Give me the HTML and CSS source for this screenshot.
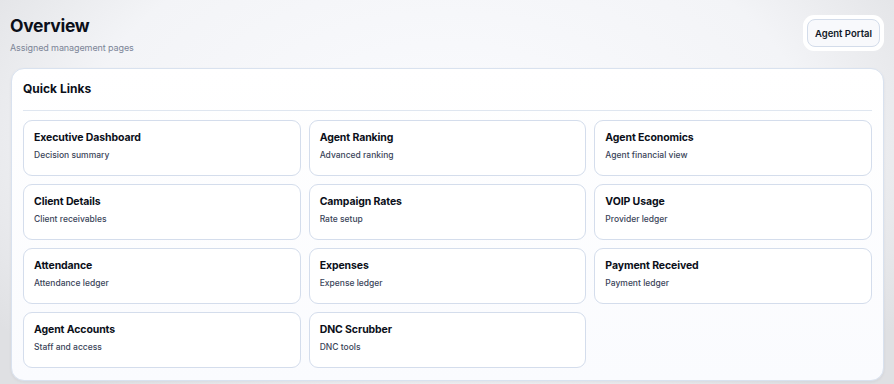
FILE: index.html
```html
<!DOCTYPE html>
<html lang="en">
<head>
    <meta charset="UTF-8">
    <meta name="viewport" content="width=device-width, initial-scale=1.0">
    <title>Overview</title>
    <link rel="stylesheet" href="styles.css">
</head>
<body>

<div class="page">
    <div class="header">
        <div>
            <h1>Overview</h1>
            <p class="subtitle">Assigned management pages</p>
        </div>
        <div class="portal-ring">
            <button class="portal-btn">Agent Portal</button>
        </div>
    </div>

    <div class="panel">
        <h2>Quick Links</h2>
        <div class="links">
            <a class="link-card" href="#"><strong>Executive Dashboard</strong><span>Decision summary</span></a>
            <a class="link-card" href="#"><strong>Agent Ranking</strong><span>Advanced ranking</span></a>
            <a class="link-card" href="#"><strong>Agent Economics</strong><span>Agent financial view</span></a>
            <a class="link-card" href="#"><strong>Client Details</strong><span>Client receivables</span></a>
            <a class="link-card" href="#"><strong>Campaign Rates</strong><span>Rate setup</span></a>
            <a class="link-card" href="#"><strong>VOIP Usage</strong><span>Provider ledger</span></a>
            <a class="link-card" href="#"><strong>Attendance</strong><span>Attendance ledger</span></a>
            <a class="link-card" href="#"><strong>Expenses</strong><span>Expense ledger</span></a>
            <a class="link-card" href="#"><strong>Payment Received</strong><span>Payment ledger</span></a>
            <a class="link-card" href="#"><strong>Agent Accounts</strong><span>Staff and access</span></a>
            <a class="link-card" href="#"><strong>DNC Scrubber</strong><span>DNC tools</span></a>
        </div>
    </div>
</div>

</body>
</html>
```

FILE: styles.css
```css
html, body {
    height: 100%;
}
body {
    margin: 0;
    font-family: Inter, "Noto Sans", sans-serif;
    color: #0b0f19;
    background: radial-gradient(ellipse 62% 85% at 50% 35%, #fafbfe 0%, #f3f4f7 65%, #dfe0e3 100%);
    overflow: hidden;
}
.page {
    padding: 12px 10px 0 11px;
}
.header {
    display: flex;
    justify-content: space-between;
    align-items: flex-start;
}
h1 {
    margin: 2px 0 0 -1px;
    font-size: 17.5px;
    line-height: 24px;
    font-weight: 700;
    letter-spacing: -0.3px;
}
.subtitle {
    margin: 3px 0 0 -1px;
    font-size: 9px;
    line-height: 13px;
    letter-spacing: -0.1px;
    color: #7c8597;
}
.portal-ring {
    margin-top: 3px;
    padding: 4px;
    background: white;
    border-radius: 11px;
}
.portal-btn {
    font-family: inherit;
    font-size: 9.5px;
    font-weight: 600;
    color: #111827;
    background: #f8f9fc;
    border: 1px solid #d3dcea;
    border-radius: 8px;
    padding: 0 7px;
    height: 28px;
}
.panel {
    margin-top: 14px;
    background: linear-gradient(#ffffff, #fafbfe);
    border: 1px solid #d9e2ef;
    border-radius: 13px;
    padding: 12px 11px 12px;
    box-shadow: 0 1px 3px rgba(30, 40, 60, 0.06);
}
h2 {
    margin: 0;
    font-size: 12px;
    line-height: 16px;
    font-weight: 700;
    padding-bottom: 13px;
    border-bottom: 1px solid #dfe6f0;
}
.links {
    display: grid;
    grid-template-columns: repeat(3, 1fr);
    gap: 8px;
    margin-top: 9px;
}
.link-card {
    display: flex;
    flex-direction: column;
    height: 56px;
    box-sizing: border-box;
    padding: 10px 10px;
    background: white;
    border: 1px solid #d4ddec;
    border-radius: 9px;
    text-decoration: none;
    color: inherit;
}
.link-card strong {
    font-size: 10.5px;
    line-height: 14px;
    font-weight: 700;
    letter-spacing: -0.1px;
}
.link-card span {
    margin-top: 4px;
    font-size: 8.5px;
    line-height: 12px;
    font-weight: 500;
    color: #3a4459;
}
```
